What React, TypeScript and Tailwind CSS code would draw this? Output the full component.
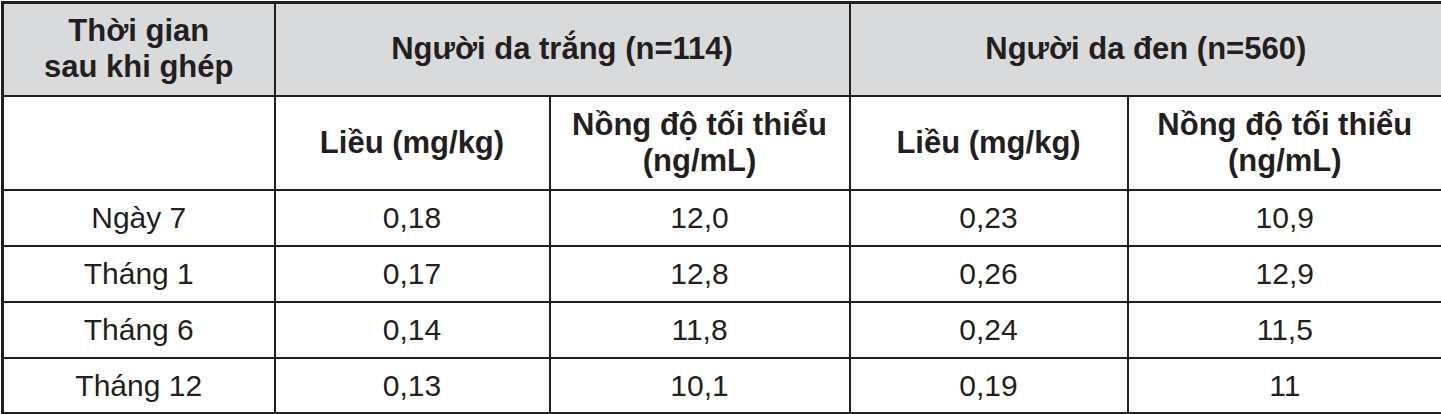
import React from "react";

const rows = [
  ["Ngày 7", "0,18", "12,0", "0,23", "10,9"],
  ["Tháng 1", "0,17", "12,8", "0,26", "12,9"],
  ["Tháng 6", "0,14", "11,8", "0,24", "11,5"],
  ["Tháng 12", "0,13", "10,1", "0,19", "11"],
];

export default function App() {
  const cell = "border-2 border-[#231f20] text-center align-middle p-0";
  return (
    <div className="w-[1441px] h-[414px] bg-white" style={{ fontFamily: '"Liberation Sans", Arial, sans-serif' }}>
      <table className="w-[1440px] table-fixed border-collapse border-[3px] border-[#231f20] text-[#231f20] text-[30px] ml-[1px] mt-[1px]">
        <colgroup>
          <col className="w-[272px]" />
          <col className="w-[275px]" />
          <col className="w-[300px]" />
          <col className="w-[278px]" />
          <col className="w-[315px]" />
        </colgroup>
        <thead>
          <tr className="h-[93px] bg-[#d9dadc] font-bold leading-[36px] text-[31px]">
            <th className={cell + " border-t-[3px] border-l-[3px]"}>Thời gian<br />sau khi ghép</th>
            <th className={cell + " border-t-[3px]"} colSpan={2}>Người da trắng (n=114)</th>
            <th className={cell + " border-t-[3px] border-r-[3px]"} colSpan={2}>Người da đen (n=560)</th>
          </tr>
          <tr className="h-[94px] font-bold leading-[36px] text-[31px]">
            <th className={cell + " border-l-[3px]"}></th>
            <th className={cell}>Liều (mg/kg)</th>
            <th className={cell}>Nồng độ tối thiểu<br />(ng/mL)</th>
            <th className={cell}>Liều (mg/kg)</th>
            <th className={cell + " border-r-[3px]"}>Nồng độ tối thiểu<br />(ng/mL)</th>
          </tr>
        </thead>
        <tbody>
          {rows.map((r, ri) => (
            <tr key={r[0]} className="h-[56px]">
              {r.map((c, i) => (
                <td
                  key={i}
                  className={
                    cell +
                    (i === 0 ? " border-l-[3px]" : "") +
                    (i === 4 ? " border-r-[3px]" : "") +
                    (ri === rows.length - 1 ? " border-b-[3px]" : "")
                  }
                >
                  {c}
                </td>
              ))}
            </tr>
          ))}
        </tbody>
      </table>
    </div>
  );
}
